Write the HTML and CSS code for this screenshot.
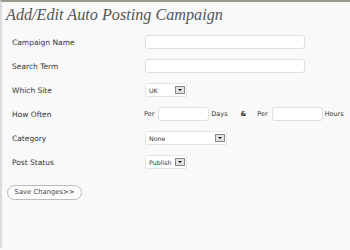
FILE: index.html
```html
<!DOCTYPE html>
<html lang="en">
<head>
    <meta charset="UTF-8">
    <title>Add/Edit Auto Posting Campaign</title>
    <link rel="stylesheet" href="styles.css">
</head>
<body>
    <div class="wrap">
        <h2 class="title">Add/Edit Auto Posting Campaign</h2>
        <form class="campaign">
            <div class="row">
                <label>Campaign Name</label>
                <div class="field"><input class="text wide" type="text"></div>
            </div>
            <div class="row">
                <label>Search Term</label>
                <div class="field"><input class="text wide" type="text"></div>
            </div>
            <div class="row">
                <label>Which Site</label>
                <div class="field">
                    <div class="select short"><span>UK</span><span class="arrow"></span></div>
                </div>
            </div>
            <div class="row">
                <label>How Often</label>
                <div class="field often">
                    <span class="small">Per</span>
                    <input class="text num" type="text">
                    <span class="small">Days</span>
                    <span class="amp">&amp;</span>
                    <span class="small">Per</span>
                    <input class="text num" type="text">
                    <span class="small">Hours</span>
                </div>
            </div>
            <div class="row">
                <label>Category</label>
                <div class="field">
                    <div class="select long"><span>None</span><span class="arrow"></span></div>
                </div>
            </div>
            <div class="row">
                <label>Post Status</label>
                <div class="field">
                    <div class="select short"><span>Publish</span><span class="arrow"></span></div>
                </div>
            </div>
            <div class="actions">
                <button class="button" type="button">Save Changes&gt;&gt;</button>
            </div>
        </form>
    </div>
</body>
</html>
```

FILE: styles.css
```css
body {
    margin: 0;
    padding: 0;
    background-color: #f9f9f9;
    font-family: "DejaVu Sans", Verdana, sans-serif;
    color: #333;
}
.wrap {
    border-top: 2px solid #999990;
    border-left: 2px solid #dcdcdc;
    height: 248px;
    box-sizing: border-box;
    overflow: hidden;
}
.title {
    font-family: "Liberation Serif", Georgia, serif;
    font-style: italic;
    font-weight: normal;
    font-size: 16.2px;
    color: #555;
    margin: 0;
    padding: 4px 0 0 4px;
    height: 24px;
}
.campaign {
    padding-left: 10px;
}
.row {
    display: flex;
    align-items: center;
    height: 24px;
}
.row label {
    width: 133px;
    font-size: 7.5px;
    color: #333;
}
.field {
    display: flex;
    align-items: center;
}
.text {
    background: #fff;
    border: 1px solid #dfdfdf;
    border-radius: 3px;
    height: 14px;
    box-sizing: border-box;
    margin: 0;
    padding: 0;
}
.wide {
    width: 160px;
}
.num {
    width: 51px;
}
.small {
    font-size: 6.5px;
    color: #333;
}
.often .small:first-child {
    margin-left: -1px;
    margin-right: 4px;
}
.often .num + .small {
    margin-left: 2px;
}
.amp {
    font-size: 6.5px;
    font-weight: bold;
    margin: 0 11px 0 13px;
}
.often .amp + .small {
    margin-right: 4px;
}
.select {
    display: flex;
    align-items: center;
    justify-content: space-between;
    background: #fff;
    border: 1px solid #e4e4e4;
    border-radius: 2px;
    height: 14px;
    box-sizing: border-box;
    padding: 0 1px 0 3px;
    font-size: 6.3px;
    color: #333;
}
.short {
    width: 42px;
}
.long {
    width: 82px;
}
.arrow {
    position: relative;
    width: 10px;
    height: 8px;
    box-sizing: border-box;
    background: #e2e2e2;
    border: 1px solid #8a8a8a;
}
.arrow::after {
    content: "";
    position: absolute;
    left: 2px;
    top: 2px;
    border-left: 2px solid transparent;
    border-right: 2px solid transparent;
    border-top: 2px solid #111;
}
.actions {
    margin-left: -5px;
    padding-top: 5px;
}
.button {
    font-family: "DejaVu Sans", Verdana, sans-serif;
    font-size: 6.8px;
    color: #464646;
    background: #fcfcfc;
    border: 1px solid #bbb;
    border-radius: 8px;
    height: 15px;
    width: 75px;
    padding: 0;
    margin: 0;
}
```
